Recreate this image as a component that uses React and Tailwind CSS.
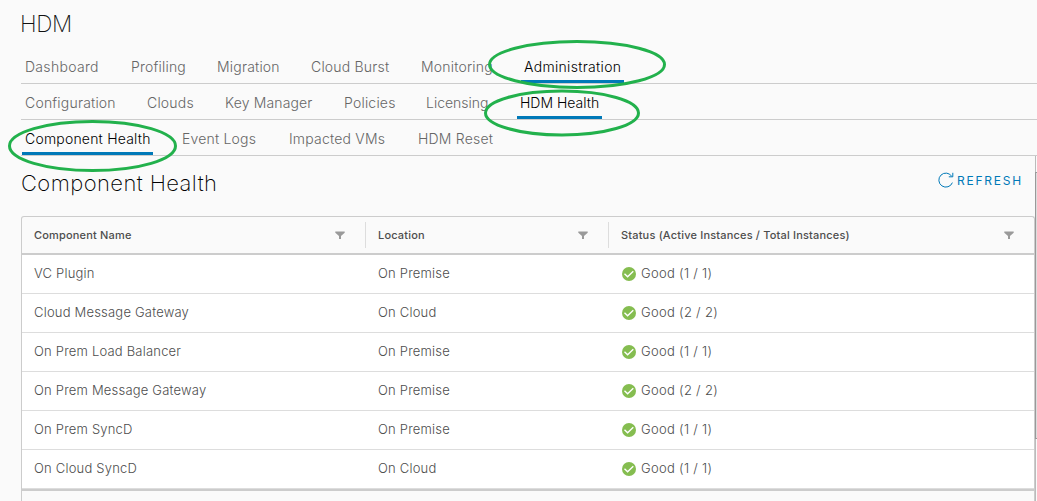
const NAV = [
  {
    items: [
      { label: "Dashboard", cell: "w-[106px] tracking-[0.3px]" },
      { label: "Profiling", cell: "w-[86px]" },
      { label: "Migration", cell: "w-[94px]" },
      { label: "Cloud Burst", cell: "w-[110px]" },
      { label: "Monitoring", cell: "w-[100px] mr-[3px]" },
      { label: "Administration", cell: "w-[103px] tracking-[0.32px]", active: true },
    ],
  },
  {
    items: [
      { label: "Configuration", cell: "w-[122px]" },
      { label: "Clouds", cell: "w-[78px]" },
      { label: "Key Manager", cell: "w-[119px] tracking-[0.15px]" },
      { label: "Policies", cell: "w-[82px]" },
      { label: "Licensing", cell: "w-[94px] tracking-[0px]" },
      { label: "HDM Health", cell: "w-[85px] tracking-[0px]", active: true },
    ],
  },
  {
    items: [
      { label: "Component Health", cell: "w-[131px]", active: true },
      { label: "Event Logs", cell: "w-[107px] ml-[26px]" },
      { label: "Impacted VMs", cell: "w-[129px]" },
      { label: "HDM Reset", cell: "w-[81px]" },
    ],
  },
];

const ROWS = [
  ["VC Plugin", "On Premise", 1],
  ["Cloud Message Gateway", "On Cloud", 2],
  ["On Prem Load Balancer", "On Premise", 1],
  ["On Prem Message Gateway", "On Premise", 2],
  ["On Prem SyncD", "On Premise", 1],
  ["On Cloud SyncD", "On Cloud", 1],
];

const COLUMNS = [
  { label: "Component Name", cell: "w-[344px] pr-[20px] border-r" },
  { label: "Location", cell: "w-[243px] pr-[20px] border-r" },
  { label: "Status (Active Instances / Total Instances)", cell: "flex-1 pr-[20px]" },
];

function Filter() {
  return (
    <svg className="mt-px h-[9px] w-[10px]" viewBox="0 0 10 9">
      <path d="M0.3 0.5H9.7V1.8L6 5V8H4V5L0.3 1.8Z" fill="#9a9a9a" />
    </svg>
  );
}

function Check() {
  return (
    <svg className="h-[14px] w-[14px]" viewBox="0 0 14 14">
      <circle cx="7" cy="7" r="7" fill="#85bd50" />
      <path d="M2.5 6.8L5.6 9.8L11.3 4.3" fill="none" stroke="white" strokeWidth="1.4" />
    </svg>
  );
}

function Tabs({ items }) {
  return (
    <nav className="ml-[21px] flex h-9 border-b border-[#ccc] pl-px">
      {items.map((t) => (
        <div
          key={t.label}
          className={`flex h-[35px] shrink-0 items-center whitespace-nowrap pl-[3px] text-[14px] ${
            t.cell.includes("tracking") ? "" : "tracking-[0.2px]"
          } ${t.cell} ${
            t.active ? "border-b-[3px] border-[#0079b8] pt-[4px] text-black" : "pt-px text-[#666]"
          }`}
        >
          {t.label}
        </div>
      ))}
    </nav>
  );
}

export default function App() {
  return (
    <div className="relative flex h-[501px] w-[1037px] flex-col overflow-hidden bg-[#fafafa] font-['Inter',sans-serif] font-light">
      <h1 className="h-12 pl-[20px] pt-[8px] text-[22.5px] leading-8 font-extralight tracking-[-0.4px] text-[#111]">HDM</h1>
      {NAV.map((n, i) => (
        <Tabs key={i} items={n.items} />
      ))}
      <div className="flex min-h-0 flex-1">
        <main className="ml-[21px] flex w-[1014px] shrink-0 flex-col">
          <div className="flex h-[60px] shrink-0 justify-between">
            <h2 className="pt-[11px] text-[22px] leading-8 font-extralight tracking-[0.42px] text-black">Component Health</h2>
            <button className="mr-[12px] flex h-[50px] items-center gap-[3px] text-[12px] font-normal tracking-[1.78px] text-[#0079b8]">
              <svg className="mb-[3px] h-4 w-4" viewBox="0 0 16 16" fill="none" stroke="#0079b8">
                <path d="M14.4 10.6A7 7 0 1 1 13.8 4.4M14.8 0.8V4.8H10.8" />
              </svg>
              REFRESH
            </button>
          </div>
          <section className="flex flex-1 flex-col rounded-t-[3px] border-x border-t border-[#ccc] text-[#4d4d4d]">
            <div className="flex h-[38px] shrink-0 items-center border-b-2 border-[#ccc]">
              {COLUMNS.map((c) => (
                <div
                  key={c.label}
                  className={`flex h-[26px] items-center justify-between border-[#ddd] pl-3 text-[11px] font-medium tracking-[0.18px] ${c.cell}`}
                >
                  {c.label}
                  <Filter />
                </div>
              ))}
            </div>
            {ROWS.map(([name, location, n]) => (
              <div
                key={name}
                className="flex h-[39px] shrink-0 items-center border-b border-[#ddd] bg-white text-[13px] tracking-[0.2px]"
              >
                <div className="w-[344px] pl-3">{name}</div>
                <div className="w-[243px] pl-3">{location}</div>
                <div className="flex items-center gap-[5px] pl-[13px]">
                  <Check />
                  <span className="tracking-[0.3px]">{`Good (${n} / ${n})`}</span>
                </div>
              </div>
            ))}
            <div className="h-[2px] shrink-0 bg-[#ccc]" />
          </section>
        </main>
        <div className="flex w-[2px] flex-col">
          <div className="h-4 border-l border-[#bbb]" />
          <div className="h-[267px] border-y border-l border-[#999] bg-[#ddd]" />
          <div className="flex-1 border-l border-[#bbb]" />
        </div>
      </div>
      <svg
        className="pointer-events-none absolute inset-0 h-[501px] w-[1037px]"
        fill="none"
        stroke="#22b14c"
        strokeWidth="3"
      >
        <ellipse cx="577" cy="64.5" rx="87.5" ry="23" />
        <ellipse cx="562" cy="113" rx="76.5" ry="22" />
        <ellipse cx="92.5" cy="146" rx="83" ry="24.5" />
      </svg>
    </div>
  );
}
